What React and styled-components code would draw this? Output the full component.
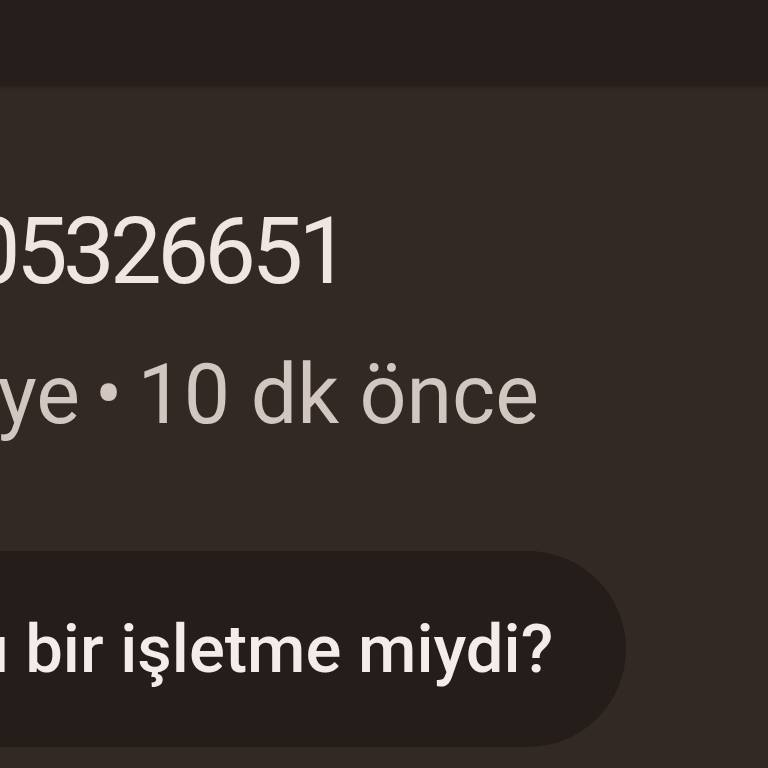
import React from "react";
import styled, { createGlobalStyle } from "styled-components";

const GlobalStyle = createGlobalStyle`
  html, body {
    margin: 0;
    padding: 0;
    background: #322925;
    overflow: hidden;
  }
  body {
    font-family: Roboto, "Noto Sans", "Liberation Sans", sans-serif;
  }
`;

const Screen = styled.div`
  width: 768px;
  height: 768px;
  overflow: hidden;
  display: flex;
  flex-direction: column;
  background: #322925;
`;

const TopBar = styled.header`
  height: 86px;
  flex-shrink: 0;
  background: #261e1a;
  box-shadow: 0 1px 3px rgba(0, 0, 0, 0.25);
`;

const Details = styled.section`
  display: flex;
  flex-direction: column;
  align-items: flex-start;
  padding-top: 120px;
  margin-left: -183px;
`;

const Number = styled.h1`
  margin: 0;
  padding-left: 10px;
  font-size: 92px;
  line-height: 92px;
  font-weight: 400;
  letter-spacing: -4.6px;
  color: #efe6e2;
  white-space: nowrap;
`;

const Meta = styled.p`
  margin: 56px 0 0;
  font-size: 82.5px;
  line-height: 82px;
  font-weight: 400;
  color: #d2c6c1;
  white-space: nowrap;
`;

const Dot = styled.span`
  margin: 0 0.18em;
`;

const Question = styled.button`
  margin-top: 115px;
  height: 196px;
  padding: 0 73px 0 112px;
  border: none;
  border-radius: 98px;
  background: #241d1a;
  color: #f4ece8;
  font-family: inherit;
  font-size: 67px;
  line-height: 66px;
  font-weight: 500;
  white-space: nowrap;
  display: inline-flex;
  align-items: center;
`;

export default function App() {
  return (
    <>
      <GlobalStyle />
      <Screen>
        <TopBar />
        <Details>
          <Number>+9005326651</Number>
          <Meta>
            Türkiye<Dot>•</Dot>10 dk önce
          </Meta>
          <Question>Bu bir işletme miydi?</Question>
        </Details>
      </Screen>
    </>
  );
}
